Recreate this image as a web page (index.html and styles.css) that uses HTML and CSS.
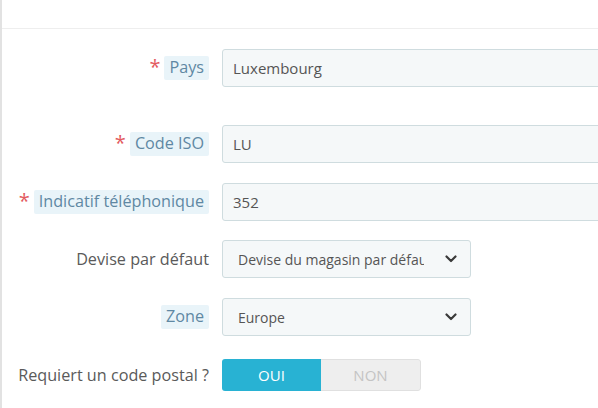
FILE: index.html
```html
<!DOCTYPE html>
<html lang="fr">
<head>
<meta charset="utf-8">
<link rel="stylesheet" href="styles.css">
</head>
<body>
<div class="panel">
  <div class="panel-head"></div>
  <form class="form">
    <div class="row row-first">
      <div class="label-col"><span class="req">*</span><span class="hint">Pays</span></div>
      <div class="field-col"><div class="input wide">Luxembourg</div></div>
    </div>
    <div class="row">
      <div class="label-col"><span class="req">*</span><span class="hint">Code ISO</span></div>
      <div class="field-col"><div class="input wide">LU</div></div>
    </div>
    <div class="row row-tight">
      <div class="label-col"><span class="req">*</span><span class="hint">Indicatif téléphonique</span></div>
      <div class="field-col"><div class="input wide">352</div></div>
    </div>
    <div class="row">
      <div class="label-col"><span class="plain">Devise par défaut</span></div>
      <div class="field-col">
        <div class="input select"><span class="sel-text">Devise du magasin par défaut</span>
          <svg class="chev" width="12" height="8" viewBox="0 0 12 8"><polyline points="1.5,1.5 6,6 10.5,1.5" fill="none" stroke="#3a3a3a" stroke-width="2.2" stroke-linecap="round" stroke-linejoin="round"/></svg>
        </div>
      </div>
    </div>
    <div class="row row-toggle-before">
      <div class="label-col"><span class="hint">Zone</span></div>
      <div class="field-col">
        <div class="input select"><span class="sel-text">Europe</span>
          <svg class="chev" width="12" height="8" viewBox="0 0 12 8"><polyline points="1.5,1.5 6,6 10.5,1.5" fill="none" stroke="#3a3a3a" stroke-width="2.2" stroke-linecap="round" stroke-linejoin="round"/></svg>
        </div>
      </div>
    </div>
    <div class="row">
      <div class="label-col"><span class="plain">Requiert un code postal ?</span></div>
      <div class="field-col">
        <div class="toggle"><span class="opt on">OUI</span><span class="opt off">NON</span></div>
      </div>
    </div>
  </form>
</div>
</body>
</html>
```
FILE: styles.css
```css
html, body {
  margin: 0;
  padding: 0;
  background: #fff;
  font-family: "Open Sans", "Noto Sans", sans-serif;
  font-size: 15px;
  color: #555;
}
.panel {
  border-left: 2px solid #e2e2e2;
  height: 408px;
  box-sizing: border-box;
  overflow: hidden;
}
.panel-head {
  height: 28px;
  border-bottom: 1px solid #eeeeee;
}
.form {
  padding-top: 20px;
}
.row {
  display: flex;
  align-items: center;
  margin-bottom: 20px;
}
.row-first {
  margin-bottom: 38px;
}
.row-tight {
  margin-bottom: 19px;
}
.row-toggle-before {
  margin-bottom: 23px;
}
.label-col {
  width: 207px;
  flex: none;
  display: flex;
  justify-content: flex-end;
  align-items: center;
  font-size: 16.2px;
}
.field-col {
  margin-left: 13px;
  flex: 1;
  min-width: 0;
}
.req {
  color: #e35b5f;
  font-size: 20px;
  line-height: 1;
  margin-right: 4px;
  position: relative;
  top: -1px;
}
.hint {
  background: #e9f4f9;
  color: #5f88a3;
  padding: 1px 5px 2px 5px;
  line-height: 21px;
  border-radius: 2px;
}
.plain {
  color: #5a5a5a;
  line-height: 23px;
}
.input {
  height: 38px;
  box-sizing: border-box;
  background: #f5f8f9;
  border: 1px solid #cfdcdf;
  border-radius: 3px;
  display: flex;
  align-items: center;
  padding-left: 10px;
  color: #555;
  white-space: nowrap;
}
.wide {
  width: 420px;
}
.select {
  width: 249px;
  padding-right: 13px;
  justify-content: space-between;
  padding-left: 15px;
  font-size: 14px;
}
.sel-text {
  overflow: hidden;
  width: 186px;
  white-space: nowrap;
}
.chev {
  flex: none;
}
.toggle {
  display: flex;
  width: 199px;
  height: 32px;
  border-radius: 3px;
  overflow: hidden;
}
.opt {
  flex: 1;
  display: flex;
  align-items: center;
  justify-content: center;
  font-size: 15px;
}
.on {
  background: #28b2d3;
  color: #fff;
}
.off {
  background: #eeeeee;
  color: #c4c4c4;
  border: 1px solid #e0e0e0;
  border-left: none;
  border-radius: 0 3px 3px 0;
}
```
